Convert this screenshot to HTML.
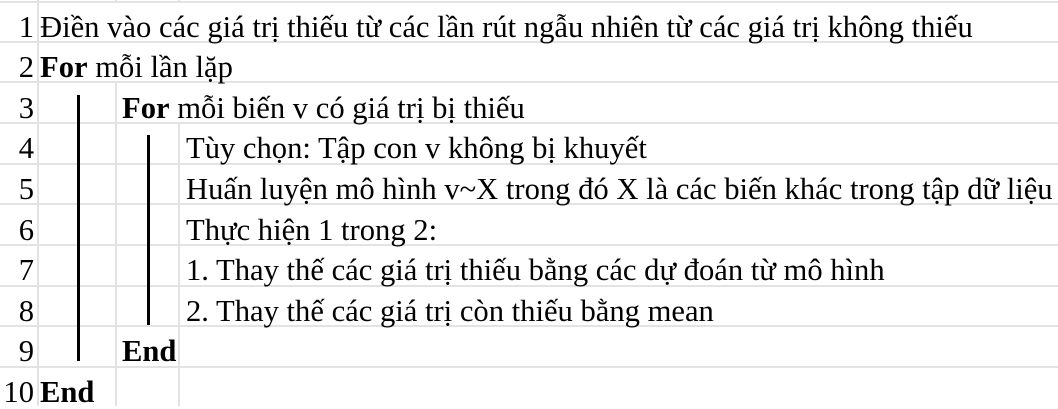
<!DOCTYPE html>
<html><head><meta charset="utf-8"><style>
body{margin:0;width:1058px;height:406px;background:#fff;position:relative;overflow:hidden;font-family:"Liberation Serif","Times New Roman","DejaVu Serif",serif;font-size:30.6px;color:#000}
.h{position:absolute;left:0;width:1058px;height:2px;background:#e3e3e3}
.v{position:absolute;width:2px;background:#e3e3e3}
.t{position:absolute;white-space:nowrap;line-height:30px}
.n{position:absolute;width:34px;text-align:right;line-height:30px}
.b{position:absolute;width:3px;background:#000}
</style></head><body>
<div class="h" style="top:1px"></div>
<div class="h" style="top:41px"></div>
<div class="h" style="top:81px"></div>
<div class="h" style="top:122px"></div>
<div class="h" style="top:163px"></div>
<div class="h" style="top:203px"></div>
<div class="h" style="top:244px"></div>
<div class="h" style="top:285px"></div>
<div class="h" style="top:325px"></div>
<div class="h" style="top:366px"></div>
<div class="v" style="left:37px;top:0;height:406px"></div>
<div class="v" style="left:115px;top:0;height:1px"></div>
<div class="v" style="left:178px;top:0;height:1px"></div>
<div class="v" style="left:115px;top:82px;height:324px"></div>
<div class="v" style="left:178px;top:122px;height:284px"></div>
<div class="b" style="left:77px;top:95px;height:266px"></div>
<div class="b" style="left:147px;top:135px;height:190px"></div>

<div class="n" style="top:12px">1</div><div class="t" style="left:40px;top:12px">Điền vào các giá trị thiếu từ các lần rút ngẫu nhiên từ các giá trị không thiếu</div>
<div class="n" style="top:52px">2</div><div class="t" style="left:40px;top:52px"><b>For</b> mỗi lần lặp</div>
<div class="n" style="top:93px">3</div><div class="t" style="left:122px;top:93px"><b>For</b> mỗi biến v có giá trị bị thiếu</div>
<div class="n" style="top:133px">4</div><div class="t" style="left:186px;top:133px">Tùy chọn: Tập con v không bị khuyết</div>
<div class="n" style="top:174px">5</div><div class="t" style="left:186px;top:174px">Huấn luyện mô hình v~X trong đó X là các biến khác trong tập dữ liệu</div>
<div class="n" style="top:215px">6</div><div class="t" style="left:186px;top:215px">Thực hiện 1 trong 2:</div>
<div class="n" style="top:255px">7</div><div class="t" style="left:186px;top:255px">1. Thay thế các giá trị thiếu bằng các dự đoán từ mô hình</div>
<div class="n" style="top:296px">8</div><div class="t" style="left:186px;top:296px">2. Thay thế các giá trị còn thiếu bằng mean</div>
<div class="n" style="top:336px">9</div><div class="t" style="left:122px;top:336px"><b>End</b></div>
<div class="n" style="top:377px">10</div><div class="t" style="left:40px;top:377px"><b>End</b></div>
</body></html>
